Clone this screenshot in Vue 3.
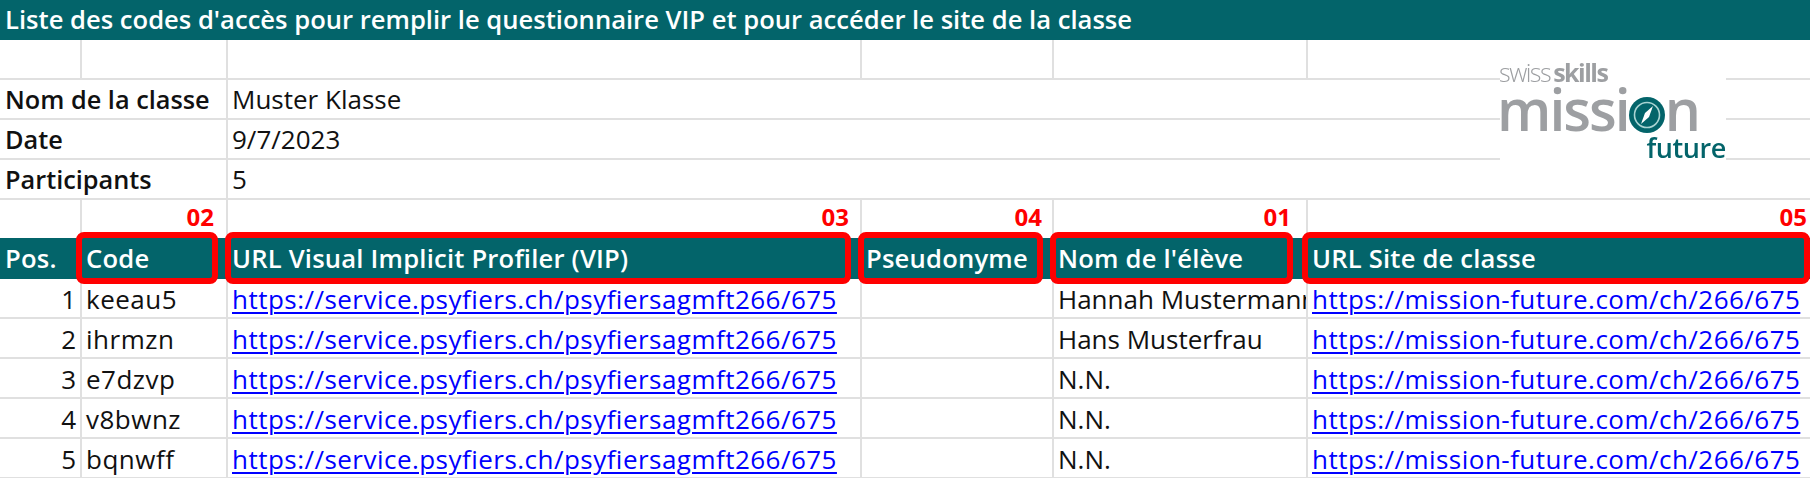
<script setup>
const columns = ['pos', 'code', 'vip', 'pseudo', 'nom', 'site']
const headers = [
  { label: 'Pos.', tag: '', gap: 5 },
  { label: 'Code', tag: '02', gap: 12, box: { left: -6, right: 10 } },
  { label: 'URL Visual Implicit Profiler (VIP)', tag: '03', gap: 11, box: { left: -3, right: 11 } },
  { label: 'Pseudonyme', tag: '04', gap: 10, box: { left: -4, right: 11 } },
  { label: "Nom de l'élève", tag: '01', gap: 15, box: { left: -4, right: 15 } },
  { label: 'URL Site de classe', tag: '05', gap: 3, box: { left: -6, right: 0 } },
]
const rows = [
  { pos: 1, code: 'keeau5', nom: 'Hannah Mustermann' },
  { pos: 2, code: 'ihrmzn', nom: 'Hans Musterfrau' },
  { pos: 3, code: 'e7dzvp', nom: 'N.N.' },
  { pos: 4, code: 'v8bwnz', nom: 'N.N.' },
  { pos: 5, code: 'bqnwff', nom: 'N.N.' },
]
const vipUrl = 'https://service.psyfiers.ch/psyfiersagmft266/675'
const siteUrl = 'https://mission-future.com/ch/266/675'
</script>

<template>
  <div class="sheet">
    <div class="title">Liste des codes d'accès pour remplir le questionnaire VIP et pour accéder le site de la classe</div>

    <div class="row">
      <div v-for="c in columns" :key="c" class="cell"></div>
    </div>
    <div class="row info">
      <div class="cell strong">Nom de la classe</div>
      <div class="cell">Muster Klasse</div>
    </div>
    <div class="row info">
      <div class="cell strong">Date</div>
      <div class="cell">9/7/2023</div>
    </div>
    <div class="row info">
      <div class="cell strong">Participants</div>
      <div class="cell">5</div>
    </div>
    <div class="row tags">
      <div
        v-for="h in headers"
        :key="h.label"
        class="cell tag"
        :style="{ paddingRight: h.gap + 'px' }"
      >{{ h.tag }}</div>
    </div>
    <div class="row head">
      <div v-for="h in headers" :key="h.label" class="cell hcell">
        {{ h.label }}
        <span
          v-if="h.box"
          class="redbox"
          :style="{ left: h.box.left + 'px', right: h.box.right + 'px' }"
        ></span>
      </div>
    </div>
    <div v-for="r in rows" :key="r.pos" class="row data">
      <div class="cell num">{{ r.pos }}</div>
      <div class="cell spaced">{{ r.code }}</div>
      <div class="cell link">{{ vipUrl }}</div>
      <div class="cell"></div>
      <div class="cell clip">{{ r.nom }}</div>
      <div class="cell link">{{ siteUrl }}</div>
    </div>

    <div class="logo">
      <div class="logo-swiss"><span class="thin">swiss</span><span class="thick">skills</span></div>
      <div class="logo-mission">
        <span>missi</span>
        <svg class="compass" viewBox="0 0 36 36" width="36" height="36">
          <circle cx="18" cy="18" r="18" fill="#03646a" />
          <circle cx="18" cy="18" r="12.5" fill="none" stroke="#a9d3d2" stroke-width="1.6" />
          <path d="M24 9 L20 20 L12 27 L16 16 Z" fill="#ffffff" />
        </svg>
        <span>n</span>
      </div>
      <div class="logo-future">future</div>
    </div>
  </div>
</template>

<style scoped>
.sheet {
  position: relative;
  width: 1810px;
  height: 478px;
  overflow: hidden;
  background: #fff;
  font-family: "Open Sans", "Noto Sans", sans-serif;
  font-size: 26px;
  color: #111;
}
.title {
  height: 40px;
  line-height: 40px;
  padding-left: 5px;
  background: #03646a;
  color: #fff;
  font-weight: 600;
  white-space: nowrap;
  font-size: 25.6px;
}
.row {
  display: grid;
  grid-template-columns: 82px 146px 634px 192px 254px 502px;
  height: 40px;
  border-bottom: 2px solid #e0e0e0;
  box-sizing: border-box;
}
.row.info {
  grid-template-columns: 228px 1582px;
}
.cell {
  min-width: 0;
  padding: 0 4px;
  line-height: 38px;
  white-space: nowrap;
  border-right: 2px solid #e0e0e0;
  box-sizing: border-box;
  overflow: hidden;
}
.cell:first-child {
  padding-left: 5px;
}
.cell:last-child {
  border-right: 0;
}
.strong {
  font-weight: 600;
  font-size: 25.3px;
}
.row.tags {
  height: 38px;
  border-bottom: 0;
}
.tag {
  color: #ff0000;
  font-weight: 700;
  font-size: 24px;
  text-align: right;
  line-height: 33px;
}
.row.head {
  height: 41px;
  border-bottom: 0;
  background: #03646a;
}
.hcell {
  position: relative;
  overflow: visible;
  color: #fff;
  font-weight: 600;
  font-size: 25.6px;
  letter-spacing: 0.2px;
  line-height: 42px;
  border-right: 0;
}
.redbox {
  position: absolute;
  top: -6px;
  bottom: -4px;
  border: 6px solid #ff0000;
  border-radius: 8px;
}
.data .cell {
  line-height: 40px;
}
.num {
  text-align: right;
}
.spaced {
  letter-spacing: 0.5px;
}
.link {
  color: #0000ff;
  letter-spacing: 0.47px;
  text-decoration: underline;
  text-decoration-thickness: 2px;
  text-underline-offset: 3px;
}
.data .clip {
  padding-right: 0;
}
.logo {
  position: absolute;
  left: 1500px;
  top: 60px;
  width: 226px;
  height: 101px;
  background: #fff;
  display: flex;
  flex-direction: column;
  font-family: "Open Sans", sans-serif;
  color: #9d9fa2;
}
.logo-swiss {
  height: 24px;
  margin-left: -1px;
  font-size: 25px;
  line-height: 24px;
  letter-spacing: -1.5px;
  filter: blur(0.4px);
}
.thin {
  font-weight: 300;
  margin-right: 3px;
}
.thick {
  font-weight: 700;
}
.logo-mission {
  height: 50px;
  margin-left: -3px;
  display: flex;
  align-items: center;
  font-size: 57px;
  font-weight: 600;
  line-height: 52px;
  letter-spacing: -2px;
  filter: blur(0.5px);
}
.compass {
  margin: 12px 0 0 0;
}
.logo-future {
  height: 27px;
  align-self: flex-end;
  font-size: 27px;
  line-height: 27px;
  font-weight: 600;
  color: #03646a;
  letter-spacing: -0.4px;
  filter: blur(0.4px);
}
</style>
